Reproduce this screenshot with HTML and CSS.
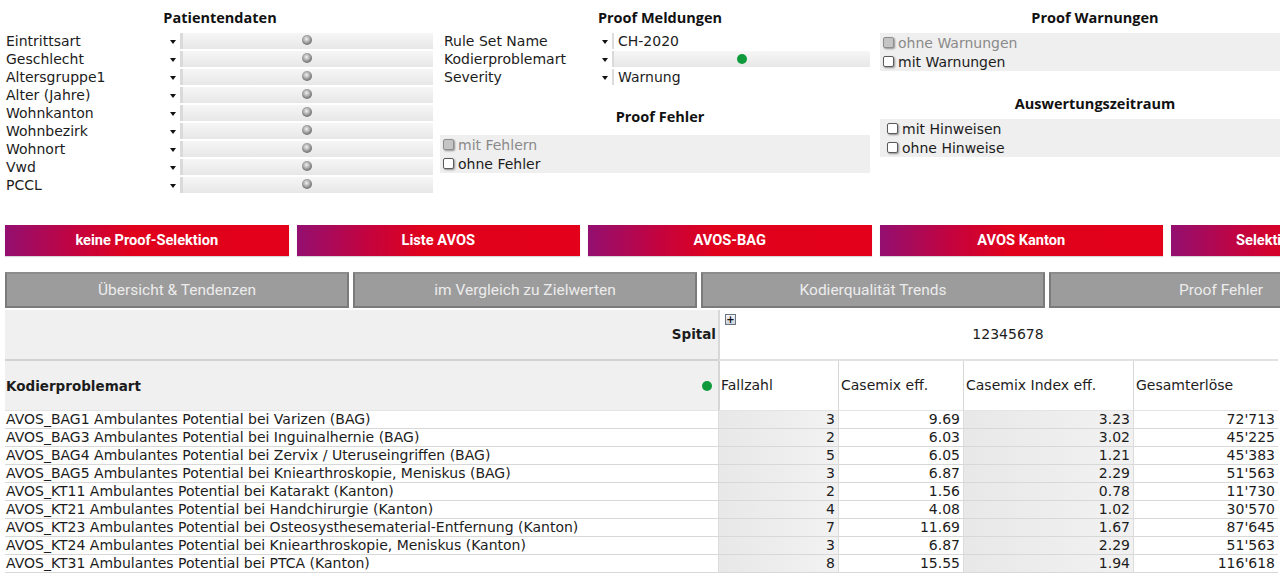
FILE: index.html
```html
<!DOCTYPE html>
<html lang="de">
<head>
<meta charset="utf-8">
<title>Proof Auswertung</title>
<link rel="stylesheet" href="styles.css">
</head>
<body>
<div class="page">
  <section class="filters">
    <div class="panel p1">
      <h2>Patientendaten</h2>
      <div class="frow"><span class="lbl">Eintrittsart</span><span class="arr"></span><span class="bar"><i class="knob"></i></span></div>
      <div class="frow"><span class="lbl">Geschlecht</span><span class="arr"></span><span class="bar"><i class="knob"></i></span></div>
      <div class="frow"><span class="lbl">Altersgruppe1</span><span class="arr"></span><span class="bar"><i class="knob"></i></span></div>
      <div class="frow"><span class="lbl">Alter (Jahre)</span><span class="arr"></span><span class="bar"><i class="knob"></i></span></div>
      <div class="frow"><span class="lbl">Wohnkanton</span><span class="arr"></span><span class="bar"><i class="knob"></i></span></div>
      <div class="frow"><span class="lbl">Wohnbezirk</span><span class="arr"></span><span class="bar"><i class="knob"></i></span></div>
      <div class="frow"><span class="lbl">Wohnort</span><span class="arr"></span><span class="bar"><i class="knob"></i></span></div>
      <div class="frow"><span class="lbl">Vwd</span><span class="arr"></span><span class="bar"><i class="knob"></i></span></div>
      <div class="frow"><span class="lbl">PCCL</span><span class="arr"></span><span class="bar"><i class="knob"></i></span></div>
    </div>
    <div class="panel p2">
      <h2>Proof Meldungen</h2>
      <div class="frow"><span class="lbl">Rule Set Name</span><span class="arr"></span><span class="val">CH-2020</span></div>
      <div class="frow"><span class="lbl">Kodierproblemart</span><span class="arr"></span><span class="bar bar-g"><i class="dot"></i></span></div>
      <div class="frow"><span class="lbl">Severity</span><span class="arr"></span><span class="val">Warnung</span></div>
      <h2 class="sub">Proof Fehler</h2>
      <div class="cbox">
        <div class="cb dis"><i></i>mit Fehlern</div>
        <div class="cb"><i></i>ohne Fehler</div>
      </div>
    </div>
    <div class="panel p3">
      <h2>Proof Warnungen</h2>
      <div class="cbox">
        <div class="cb dis"><i></i>ohne Warnungen</div>
        <div class="cb"><i></i>mit Warnungen</div>
      </div>
      <h2 class="sub2">Auswertungszeitraum</h2>
      <div class="cbox cbox-in">
        <div class="cb"><i></i>mit Hinweisen</div>
        <div class="cb"><i></i>ohne Hinweise</div>
      </div>
    </div>
  </section>

  <nav class="btns">
    <div class="btn">keine Proof-Selektion</div>
    <div class="btn">Liste AVOS</div>
    <div class="btn">AVOS-BAG</div>
    <div class="btn">AVOS Kanton</div>
    <div class="btn">Selektion zurücksetzen</div>
  </nav>

  <nav class="tabs">
    <div class="tab">Übersicht &amp; Tendenzen</div>
    <div class="tab">im Vergleich zu Zielwerten</div>
    <div class="tab">Kodierqualität Trends</div>
    <div class="tab">Proof Fehler</div>
  </nav>

  <div class="tbl">
    <div class="h-spital">Spital</div>
    <div class="h-num"><span class="plus">+</span>12345678</div>
    <div class="h-kod"><span>Kodierproblemart</span><i class="dot"></i></div>
    <div class="ch">Fallzahl</div>
    <div class="ch">Casemix eff.</div>
    <div class="ch">Casemix Index eff.</div>
    <div class="ch">Gesamterlöse</div>

    <div class="c0">AVOS_BAG1 Ambulantes Potential bei Varizen (BAG)</div><div class="cn g">3</div><div class="cn">9.69</div><div class="cn g">3.23</div><div class="cn">72'713</div>
    <div class="c0">AVOS_BAG3 Ambulantes Potential bei Inguinalhernie (BAG)</div><div class="cn g">2</div><div class="cn">6.03</div><div class="cn g">3.02</div><div class="cn">45'225</div>
    <div class="c0">AVOS_BAG4 Ambulantes Potential bei Zervix / Uteruseingriffen (BAG)</div><div class="cn g">5</div><div class="cn">6.05</div><div class="cn g">1.21</div><div class="cn">45'383</div>
    <div class="c0">AVOS_BAG5 Ambulantes Potential bei Kniearthroskopie, Meniskus (BAG)</div><div class="cn g">3</div><div class="cn">6.87</div><div class="cn g">2.29</div><div class="cn">51'563</div>
    <div class="c0">AVOS_KT11 Ambulantes Potential bei Katarakt (Kanton)</div><div class="cn g">2</div><div class="cn">1.56</div><div class="cn g">0.78</div><div class="cn">11'730</div>
    <div class="c0">AVOS_KT21 Ambulantes Potential bei Handchirurgie (Kanton)</div><div class="cn g">4</div><div class="cn">4.08</div><div class="cn g">1.02</div><div class="cn">30'570</div>
    <div class="c0">AVOS_KT23 Ambulantes Potential bei Osteosysthesematerial-Entfernung (Kanton)</div><div class="cn g">7</div><div class="cn">11.69</div><div class="cn g">1.67</div><div class="cn">87'645</div>
    <div class="c0">AVOS_KT24 Ambulantes Potential bei Kniearthroskopie, Meniskus (Kanton)</div><div class="cn g">3</div><div class="cn">6.87</div><div class="cn g">2.29</div><div class="cn">51'563</div>
    <div class="c0">AVOS_KT31 Ambulantes Potential bei PTCA (Kanton)</div><div class="cn g">8</div><div class="cn">15.55</div><div class="cn g">1.94</div><div class="cn">116'618</div>
  </div>
</div>
</body>
</html>
```

FILE: styles.css
```css
html, body {
  margin: 0;
  padding: 0;
}
body {
  width: 1280px;
  height: 577px;
  overflow: hidden;
  background: #fff;
  color: #1c1c1c;
  font-family: "DejaVu Sans", Verdana, sans-serif;
  font-size: 14px;
}
.page {
  width: 1280px;
}

/* ---------- filter panels ---------- */
.filters {
  display: flex;
  height: 225px;
}
.panel {
  flex: none;
}
.p1 { width: 440px; }
.p2 { width: 440px; }
.p3 { width: 430px; }

.panel h2 {
  margin: 0;
  padding-top: 8px;
  height: 25px;
  line-height: 20px;
  font-family: "Open Sans", sans-serif;
  font-weight: 700;
  font-size: 14.5px;
  text-align: center;
  color: #111;
}
.panel h2.sub {
  padding-top: 20px;
  height: 28px;
}
.panel h2.sub2 {
  padding-top: 23px;
  height: 25px;
}

.frow {
  display: flex;
  height: 18px;
}
.lbl {
  flex: none;
  line-height: 16px;
  white-space: nowrap;
}
.p1 .lbl { width: 160px; padding-left: 6px; }
.p2 .lbl { width: 154px; padding-left: 4px; }

.arr {
  flex: none;
  width: 14px;
  height: 16px;
  display: flex;
  align-items: center;
  justify-content: center;
}
.arr::before {
  content: "";
  display: block;
  border-left: 3.5px solid transparent;
  border-right: 3.5px solid transparent;
  border-top: 4px solid #111;
  margin-top: 1px;
}

.bar {
  flex: none;
  height: 16px;
  box-sizing: border-box;
  border-left: 3px solid #dadada;
  background: linear-gradient(#f6f6f6, #e7e7e7);
  display: flex;
  align-items: center;
}
.p1 .bar {
  width: 253px;
  padding-left: 119px;
}
.p2 .bar {
  width: 258px;
  border-left-width: 2px;
  padding-left: 123px;
}
.knob {
  display: block;
  width: 10px;
  height: 10px;
  margin-top: -3px;
  border-radius: 50%;
  background: radial-gradient(circle at 45% 40%, #f2f2f2 0, #bdbdbd 30%, #7a7a7a 65%, #5c5c5c 100%);
}
.dot {
  display: block;
  width: 10px;
  height: 10px;
  border-radius: 50%;
  background: #0f9a3c;
}

.val {
  flex: none;
  width: 258px;
  height: 16px;
  line-height: 16px;
  box-sizing: border-box;
  border-left: 2px solid #dcdcdc;
  padding-left: 4px;
}

.cbox {
  background: #efefef;
  padding: 0;
}
.p2 .cbox {
  width: 430px;
}
.cb {
  display: flex;
  align-items: center;
  height: 19px;
  padding-left: 3px;
  white-space: nowrap;
}
.p3 .cb { padding-left: 3px; }
.p3 .cbox-in .cb { padding-left: 7px; }
.cb i {
  flex: none;
  display: block;
  width: 9px;
  height: 9px;
  margin-right: 4px;
  border: 1px solid #5a5a5a;
  border-radius: 2px;
  background: #fff;
  box-shadow: 1px 1px 2px rgba(0,0,0,0.4);
}
.cb.dis {
  color: #8a8a8a;
}
.cb.dis i {
  background: #c4c4c4;
  border-color: #8e8e8e;
}

/* ---------- action buttons ---------- */
.btns {
  display: flex;
  gap: 8px;
  padding-left: 5px;
  height: 31px;
}
.btn {
  flex: none;
  width: 283.5px;
  height: 31px;
  line-height: 31px;
  text-align: center;
  white-space: nowrap;
  color: #fff;
  font-family: "Liberation Sans Narrow", "Roboto", sans-serif;
  font-weight: 700;
  font-size: 14.6px;
  background: linear-gradient(to right, #930f70 0%, #c4033f 25%, #e0011c 45%, #e3001a 100%);
  box-shadow: 0 1px 1px rgba(0,0,0,0.15);
}

/* ---------- tabs ---------- */
.tabs {
  display: flex;
  gap: 4px;
  padding-left: 5px;
  margin-top: 16px;
  height: 36px;
}
.tab {
  flex: none;
  width: 344px;
  height: 36px;
  box-sizing: border-box;
  border: 2px solid #7b7b7b;
  border-top-color: #8c8c8c;
  background: #9c9c9c;
  color: #ececec;
  text-align: center;
  line-height: 32px;
  font-family: "Liberation Sans Narrow", "Roboto", sans-serif;
  font-size: 15.5px;
  white-space: nowrap;
}

/* ---------- table ---------- */
.tbl {
  display: grid;
  grid-template-columns: 713px 120px 125px 170px 145px;
  margin-top: 2px;
  margin-left: 5px;
}
.h-spital {
  grid-column: 1;
  height: 49px;
  line-height: 49px;
  text-align: right;
  padding-right: 2px;
  background: #f0f0f0;
  border-bottom: 2px solid #d2d2d2;
  font-weight: 700;
  font-size: 13.5px;
}
.h-num {
  grid-column: 2 / span 4;
  position: relative;
  height: 49px;
  line-height: 49px;
  text-align: center;
  padding-left: 18px;
  background: #fff;
  border-left: 2px solid #d8d8d8;
  border-bottom: 2px solid #e2e2e2;
}
.plus {
  position: absolute;
  left: 5px;
  top: 4px;
  width: 9px;
  height: 9px;
  border: 1px solid #6a7480;
  background: linear-gradient(#f4f6f8, #cdd3da);
  color: #111;
  font-size: 10px;
  font-weight: 700;
  line-height: 9px;
  text-align: center;
}
.h-kod {
  grid-column: 1;
  height: 49px;
  display: flex;
  align-items: center;
  justify-content: space-between;
  padding-left: 1px;
  padding-right: 6px;
  background: #f0f0f0;
  font-weight: 700;
  font-size: 13.5px;
  border-bottom: 1px solid #e4e4e4;
}
.ch {
  height: 49px;
  line-height: 49px;
  padding-left: 2px;
  background: #fff;
  border-left: 1px solid #d6d6d6;
  border-bottom: 1px solid #e4e4e4;
  white-space: nowrap;
}
.ch:nth-of-type(4) {
  border-left-width: 2px;
  padding-left: 1px;
}

.c0 {
  height: 17px;
  line-height: 17px;
  padding-left: 1px;
  border-bottom: 1px solid #d8d8d8;
  white-space: nowrap;
}
.cn {
  height: 17px;
  line-height: 17px;
  text-align: right;
  padding-right: 3px;
  border-left: 1px solid #dcdcdc;
  border-bottom: 1px solid #d8d8d8;
  background: #fff;
}
.cn.g {
  background: linear-gradient(to right, #e8e8e8, #f2f2f2);
}
```
